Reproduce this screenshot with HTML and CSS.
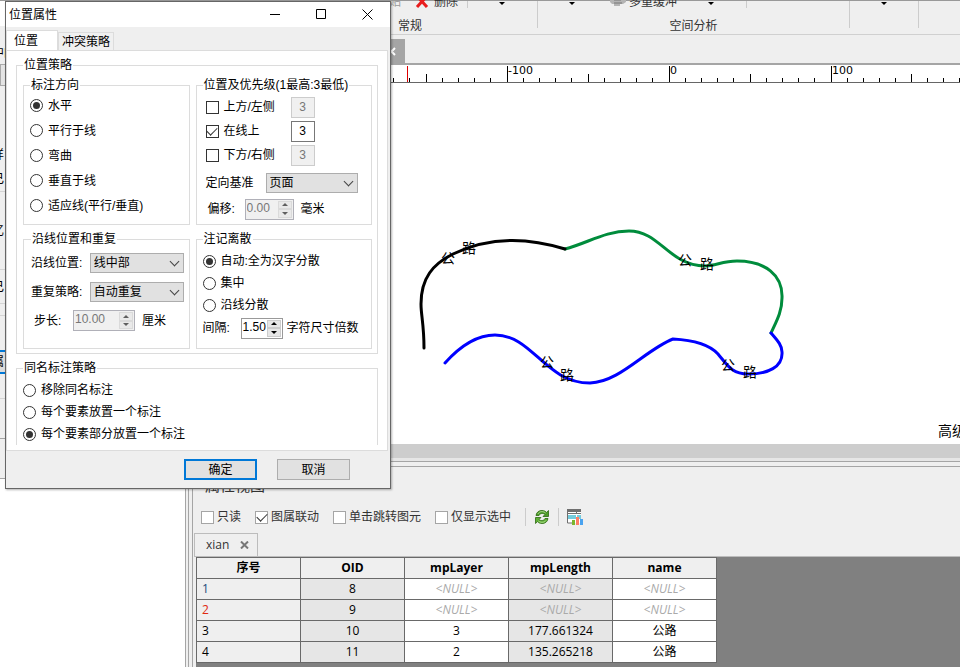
FILE: index.html
```html
<!DOCTYPE html>
<html lang="zh-CN">
<head>
    <meta charset="UTF-8">
    <meta name="viewport" content="width=device-width, initial-scale=1.0">
    <title>位置属性</title>
    <link rel="stylesheet" href="styles.css">
</head>
<body>
    <div class="app">
        <aside class="side">
            <div class="side-head"></div>
            <div class="side-row row-label"><span>中的</span></div>
            <div class="side-box"></div>
            <div class="side-row row-gap"></div>
            <div class="side-row row-text"><span>样</span></div>
            <div class="side-row row-text line"><span>己</span></div>
            <div class="side-row row-tall line"><span>忆</span></div>
            <div class="side-row row-mid line"><span>己</span></div>
            <div class="side-row row-thin line"></div>
            <div class="side-row row-mid"></div>
            <div class="side-row row-selected"><span>属</span></div>
            <div class="side-row row-text line"></div>
            <div class="side-row row-block dark"></div>
            <div class="side-row row-block dark"></div>
            <div class="side-body"></div>
        </aside>

        <main class="main">
            <div class="ribbon">
                <div class="ribbon-group group-start"></div>
                <div class="ribbon-group group-common">
                    <div class="tools">
                        <span class="muted">粘贴</span>
                        <svg class="icon-delete" width="14" height="14" viewBox="0 0 14 14"><path d="M2 2L12 13M12 2L2 13" stroke="#e81c1c" stroke-width="3" fill="none"/></svg>
                        <span>删除</span>
                        <i class="tool-sep"></i>
                        <i class="drop"></i>
                    </div>
                    <div class="caption">常规</div>
                </div>
                <div class="ribbon-group group-analysis">
                    <div class="tools">
                        <i class="drop"></i>
                        <svg class="icon-buffer" width="18" height="12" viewBox="0 0 18 12"><path d="M1 5h16v3l-3 2h-3v2H5v-2H3L1 8z" fill="#b4b4b4"/><path d="M5 6h7M5 9h8" stroke="#777" fill="none"/></svg>
                        <span>多重缓冲</span>
                        <i class="drop"></i>
                        <i class="tool-sep"></i>
                    </div>
                    <div class="caption">空间分析</div>
                </div>
                <div class="ribbon-group group-more">
                    <div class="tools"><i class="drop"></i></div>
                </div>
            </div>

            <div class="doc-tabs">
                <div class="doc-tab">
                    <svg width="9" height="9" viewBox="0 0 9 9"><path d="M1 1l7 7M8 1L1 8" stroke="#fff" stroke-width="2" fill="none"/></svg>
                </div>
            </div>

            <svg class="ruler" height="17">
                <g transform="translate(-186 -65)">
                    <path d="M393.500 78v4M409.500 78v4M442.500 78v4M458.500 78v4M474.500 78v4M490.500 78v4M523.500 78v4M539.500 78v4M555.500 78v4M571.500 78v4M604.500 78v4M620.500 78v4M636.500 78v4M652.500 78v4M685.500 78v4M701.500 78v4M717.500 78v4M733.500 78v4M766.500 78v4M782.500 78v4M798.500 78v4M814.500 78v4M847.500 78v4M863.500 78v4M879.500 78v4M895.500 78v4M927.500 78v4M943.500 78v4M959.500 78v4" stroke="#000"/>
                    <path d="M426.500 74v8M588.500 74v8M750.500 74v8M911.500 74v8M507.500 66v16M669.500 66v16M831.500 66v16" stroke="#000"/>
                    <path d="M407.500 66v16" stroke="#e00000"/>
                    <text x="508" y="74">-100</text>
                    <text x="670" y="74">0</text>
                    <text x="832" y="74">100</text>
                </g>
            </svg>

            <svg class="map">
                <g transform="translate(-186 -83)">
                    <path class="road green" d="M565 249C588 243 605 231 629 231C660 231 668 265 705 266C716 266 722 261 737 261C765 261 783 275 782 298C782 312 776 322 771 333"/>
                    <path class="road black" d="M424 348C424 325 421 315 421 304C421 278 433 264 453 254C490 236 530 238 565 249"/>
                    <path class="road blue" d="M445 363C462 344 480 335 495 335C533 335 545 383 590 383C620 382 645 350 673 339C692 340 709 344 718 354C728 366 732 374 748 374C768 374 783 367 782 352C782 345 777 340 771 333"/>
                    <text x="441" y="263">公</text>
                    <text x="462" y="253">路</text>
                    <text x="540" y="367">公</text>
                    <text x="560" y="380">路</text>
                    <text x="678" y="265">公</text>
                    <text x="700" y="269">路</text>
                    <text x="721" y="370">公</text>
                    <text x="743" y="377">路</text>
                    <text x="938" y="436">高级</text>
                </g>
            </svg>
            <div class="scrollbar"></div>

            <section class="dock">
                <div class="dock-inner">
                    <h2 class="dock-title">属性视图</h2>
                    <div class="dock-tools">
                        <label><input type="checkbox" class="check light">只读</label>
                        <label><input type="checkbox" class="check light" checked>图属联动</label>
                        <label><input type="checkbox" class="check light">单击跳转图元</label>
                        <label><input type="checkbox" class="check light">仅显示选中</label>
                        <i class="bar"></i>
                        <button class="icon-button" aria-label="刷新">
                            <svg width="16" height="16" viewBox="0 0 16 16">
                                <path d="M2 6.500C2.500 3 5 1.500 8 1.500c2 0 3.500.7 4.500 1.900L14.500 1.500v6H9l2-2C9.500 4 6 4 5 6.500z" fill="#4c9c28" stroke="#2c6812" stroke-width=".8"/>
                                <path d="M14 9.500c-.5 3.500-3 5-6 5-2 0-3.500-.7-4.500-1.900L1.500 14.500v-6H7l-2 2c1.500 1.500 5 1.500 6-1z" fill="#5db034" stroke="#2c6812" stroke-width=".8"/>
                                <path d="M4 4.800c1.500-2.500 5-3 7.500-.8M12 11.500c-1.500 2-5 2.500-7.500.5" stroke="#b5e096" fill="none"/>
                            </svg>
                        </button>
                        <i class="bar"></i>
                        <button class="icon-button" aria-label="统计">
                            <svg width="17" height="17" viewBox="0 0 17 17">
                                <path d="M0 0h14v5H0z" fill="#6f6f6f"/>
                                <path d="M1 3h8v1H1zM10 3h4v1h-4z" fill="#fff"/>
                                <path d="M1 5h13v9H1z" fill="#fff"/>
                                <path d="M1 6h8v4H1zM10 6h4v4h-4z" fill="#74ccdc"/>
                                <path d="M.5 4v10H5" stroke="#6f6f6f" fill="none"/>
                                <path d="M5 11h3v5H5z" fill="#7ab62d"/>
                                <path d="M9 8h3v8H9z" fill="#ff7d66"/>
                                <path d="M13 10h3v6h-3z" fill="#4aa3f0"/>
                            </svg>
                        </button>
                    </div>
                    <div class="sheet-tabs">
                        <div class="sheet-tab">
                            <span>xian</span>
                            <button class="icon-button" aria-label="关闭">
                                <svg width="9" height="8" viewBox="0 0 9 8"><path d="M1 0.500l7 7M8 0.500l-7 7" stroke="#777" stroke-width="2" fill="none"/></svg>
                            </button>
                        </div>
                    </div>
                    <div class="grid-wrap">
                        <table class="grid">
                            <thead>
                                <tr><th>序号</th><th>OID</th><th>mpLayer</th><th>mpLength</th><th>name</th></tr>
                            </thead>
                            <tbody>
                                <tr><td class="num blue-num">1</td><td class="shade">8</td><td class="null">&lt;NULL&gt;</td><td class="shade null">&lt;NULL&gt;</td><td class="null">&lt;NULL&gt;</td></tr>
                                <tr><td class="num red-num">2</td><td class="shade">9</td><td class="null">&lt;NULL&gt;</td><td class="shade null">&lt;NULL&gt;</td><td class="null">&lt;NULL&gt;</td></tr>
                                <tr><td class="num">3</td><td class="shade">10</td><td>3</td><td class="shade">177.661324</td><td>公路</td></tr>
                                <tr><td class="num">4</td><td class="shade">11</td><td>2</td><td class="shade">135.265218</td><td>公路</td></tr>
                            </tbody>
                        </table>
                    </div>
                </div>
            </section>
        </main>
    </div>

    <div class="dialog" role="dialog" aria-labelledby="dialog-title">
        <div class="titlebar">
            <h1 id="dialog-title">位置属性</h1>
            <button class="window-button" aria-label="最小化"><svg width="11" height="11"><path d="M0 5.500h10" stroke="#000"/></svg></button>
            <button class="window-button" aria-label="最大化"><svg width="11" height="11"><path d="M.5.500h9v9h-9z" stroke="#000" fill="none"/></svg></button>
            <button class="window-button" aria-label="关闭"><svg width="11" height="11"><path d="M.5.500l10 10M10.500.500l-10 10" stroke="#000"/></svg></button>
        </div>
        <div class="tabs">
            <button class="tab active">位置</button>
            <button class="tab">冲突策略</button>
        </div>
        <div class="pane">
            <fieldset class="outer">
                <legend>位置策略</legend>
                <div class="columns">
                    <fieldset class="inner direction">
                        <legend>标注方向</legend>
                        <label><input type="radio" class="radio" name="direction" checked>水平</label>
                        <label><input type="radio" class="radio" name="direction">平行于线</label>
                        <label><input type="radio" class="radio" name="direction">弯曲</label>
                        <label><input type="radio" class="radio" name="direction">垂直于线</label>
                        <label><input type="radio" class="radio" name="direction">适应线(平行/垂直)</label>
                    </fieldset>

                    <fieldset class="inner priority">
                        <legend>位置及优先级(1最高:3最低)</legend>
                        <div class="place">
                            <label><input type="checkbox" class="check">上方/左侧</label>
                            <input type="text" class="level" value="3" aria-label="上方优先级" disabled>
                        </div>
                        <div class="place">
                            <label><input type="checkbox" class="check" checked>在线上</label>
                            <input type="text" class="level" value="3" aria-label="线上优先级">
                        </div>
                        <div class="place">
                            <label><input type="checkbox" class="check">下方/右侧</label>
                            <input type="text" class="level" value="3" aria-label="下方优先级" disabled>
                        </div>
                        <div class="field base">
                            <label for="base">定向基准</label>
                            <span class="combo"><select id="base"><option>页面</option></select></span>
                        </div>
                        <div class="field offset">
                            <label for="offset">偏移:</label>
                            <span class="spin disabled"><input type="text" id="offset" value="0.00" disabled><span class="arrows"><button aria-label="增加" disabled></button><button aria-label="减少" disabled></button></span></span>
                            <span>毫米</span>
                        </div>
                    </fieldset>

                    <fieldset class="inner repeat">
                        <legend>沿线位置和重复</legend>
                        <div class="field">
                            <label for="along">沿线位置:</label>
                            <span class="combo"><select id="along"><option>线中部</option></select></span>
                        </div>
                        <div class="field">
                            <label for="policy">重复策略:</label>
                            <span class="combo"><select id="policy"><option>自动重复</option></select></span>
                        </div>
                        <div class="field step">
                            <label for="step">步长:</label>
                            <span class="spin wide disabled"><input type="text" id="step" value="10.00" disabled><span class="arrows"><button aria-label="增加" disabled></button><button aria-label="减少" disabled></button></span></span>
                            <span>厘米</span>
                        </div>
                    </fieldset>

                    <fieldset class="inner spread">
                        <legend>注记离散</legend>
                        <label><input type="radio" class="radio" name="spread" checked>自动:全为汉字分散</label>
                        <label><input type="radio" class="radio" name="spread">集中</label>
                        <label><input type="radio" class="radio" name="spread">沿线分散</label>
                        <div class="field">
                            <label for="space">间隔:</label>
                            <span class="spin narrow"><input type="text" id="space" value="1.50"><span class="arrows"><button aria-label="增加"></button><button aria-label="减少"></button></span></span>
                            <span>字符尺寸倍数</span>
                        </div>
                    </fieldset>
                </div>
            </fieldset>

            <fieldset class="outer same-name">
                <legend>同名标注策略</legend>
                <label><input type="radio" class="radio" name="same">移除同名标注</label>
                <label><input type="radio" class="radio" name="same">每个要素放置一个标注</label>
                <label><input type="radio" class="radio" name="same" checked>每个要素部分放置一个标注</label>
            </fieldset>
        </div>
        <div class="buttons">
            <button class="button default">确定</button>
            <button class="button">取消</button>
        </div>
    </div>
</body>
</html>
```

FILE: styles.css
```css
* {
    box-sizing: border-box;
}
body {
    margin: 0;
    height: 100vh;
    overflow: hidden;
    background-color: #efefef;
    color: #000;
    font-family: "Liberation Sans", "Noto Sans CJK SC", sans-serif;
    font-size: 12px;
    line-height: 14px;
}
button, input, select {
    font: inherit;
    color: inherit;
    margin: 0;
    padding: 0;
    border-radius: 0;
}
svg {
    display: block;
    flex: none;
}
label {
    display: flex;
    align-items: center;
    white-space: nowrap;
}

/* main window */
.app {
    display: flex;
    height: 100%;
    border-top: 1px solid #999;
}
.side {
    flex: none;
    display: flex;
    flex-direction: column;
    width: 186px;
    border-right: 1px solid #a5a5a5;
}
.side-head {
    height: 25px;
    background-color: #fff;
}
.side-row {
    display: flex;
    align-items: center;
    height: 24px;
}
.side-row span {
    margin-left: -8px;
}
.row-label {
    height: 38px;
    align-items: flex-end;
    padding-bottom: 4px;
}
.side-box {
    height: 22px;
    border: 1px solid #aaa;
    background-color: #e4e4e4;
}
.row-gap {
    height: 56px;
}
.row-text {
    height: 25px;
}
.row-tall {
    height: 78px;
}
.row-mid {
    height: 34px;
}
.row-thin {
    height: 12px;
}
.row-selected {
    border-top: 2px solid #0078d7;
    border-bottom: 2px solid #0078d7;
    background-color: #ddd;
}
.row-block {
    height: 40px;
}
.line {
    border-bottom: 1px solid #d5d5d5;
}
.dark {
    border-bottom: 1px solid #a5a5a5;
}
.side-body {
    flex: 1;
    background-color: #fff;
}
.main {
    flex: 1;
    min-width: 0;
    display: flex;
    flex-direction: column;
}

/* ribbon */
.ribbon {
    display: flex;
    flex: none;
    height: 34px;
    border-bottom: 1px solid #d0d0d0;
    color: #333;
}
.ribbon-group {
    height: 27px;
    border-right: 1px solid #ccc;
}
.group-start {
    width: 97px;
}
.group-common {
    width: 255px;
}
.group-analysis {
    width: 312px;
}
.group-more {
    width: 69px;
}
.tools {
    display: flex;
    align-items: flex-end;
    height: 7px;
    white-space: nowrap;
}
.tools span {
    line-height: 16px;
    margin-bottom: -2px;
}
.muted {
    color: #999;
    margin-left: 94px;
}
.icon-delete {
    margin: 0 5px 0 14px;
}
.tool-sep {
    width: 1px;
    height: 7px;
    margin-left: 9px;
    background-color: #ccc;
}
.drop {
    margin: 0 0 3px 31px;
    border: 3px solid transparent;
    border-top-color: #000;
    border-bottom: 0;
}
.icon-buffer {
    margin: 0 2px 2px 34px;
}
.group-analysis .tool-sep {
    margin-left: 32px;
}
.caption {
    margin-top: 11px;
    text-align: center;
}
.doc-tabs {
    flex: none;
    display: flex;
    align-items: flex-end;
    height: 30px;
    border-bottom: 2px solid #a5a5a5;
}
.doc-tab {
    display: flex;
    align-items: center;
    justify-content: flex-end;
    width: 219px;
    height: 24px;
    padding-right: 9px;
    background-color: #a5a5a5;
}

/* ruler and map */
.ruler {
    width: 100%;
    background-color: #fff;
    font-family: "DejaVu Sans", sans-serif;
    font-size: 11px;
}
.map {
    flex: 1;
    width: 100%;
    min-height: 0;
    border-top: 1px solid #666;
    background-color: #fff;
    font-size: 14px;
}
.road {
    fill: none;
    stroke-width: 3;
    stroke-linecap: round;
}
.black {
    stroke: #000;
}
.green {
    stroke: #008c3c;
}
.blue {
    stroke: #00f;
}
.scrollbar {
    flex: none;
    height: 17px;
    border-bottom: 3px solid #e6e6e6;
    background-color: #cdcdcd;
}

/* attribute view */
.dock {
    flex: none;
    display: flex;
    height: 206px;
    margin-left: 2px;
    padding: 4px 0 0 3px;
    border-top: 1px solid #a5a5a5;
    border-left: 1px solid #a5a5a5;
}
.dock-inner {
    flex: 1;
    min-width: 0;
    display: flex;
    flex-direction: column;
    padding-left: 1px;
    border-top: 1px solid #a5a5a5;
    border-left: 1px solid #a5a5a5;
}
.dock-title {
    margin: 12px 0 0 11px;
    font-size: 15px;
    font-weight: normal;
    color: #333;
}
.dock-tools {
    display: flex;
    align-items: center;
    height: 26px;
    margin: 11px 0 0 7px;
    color: #333;
}
.dock-tools label {
    margin-right: 14px;
}
.bar {
    width: 1px;
    height: 18px;
    margin-right: 8px;
    background-color: #ccc;
}
.icon-button {
    display: flex;
    border: 0;
    background: none;
}
.dock-tools .icon-button {
    margin-right: 8px;
}
.sheet-tabs {
    display: flex;
    height: 24px;
    margin-top: 3px;
    border-bottom: 1px solid #bcbcbc;
}
.sheet-tab {
    display: flex;
    align-items: center;
    gap: 11px;
    width: 64px;
    height: 23px;
    padding-left: 11px;
    border: 1px solid #bcbcbc;
    border-bottom: 0;
    color: #333;
    font-family: "Open Sans", sans-serif;
}
.grid-wrap {
    flex: 1;
    margin-left: 2px;
    background-color: #808080;
}
.grid {
    width: 521px;
    table-layout: fixed;
    border-collapse: collapse;
    font-family: "Open Sans", "Noto Sans CJK SC", sans-serif;
    line-height: 16px;
}
.grid th, .grid td {
    height: 21px;
    padding: 0;
    border: 1px solid #696969;
    text-align: center;
}
.grid th {
    background-color: #efefef;
    font-weight: bold;
}
.grid td {
    background-color: #fff;
}
.grid td.num {
    padding-left: 5px;
    background-color: #efefef;
    text-align: left;
}
.grid td.shade {
    background-color: #e6e6e6;
}
.grid td.null {
    color: #aaa;
    font-style: italic;
}
.grid td.blue-num {
    color: #1a4a7a;
}
.grid td.red-num {
    color: #e02810;
}

/* form controls */
.check, .radio {
    flex: none;
    appearance: none;
    width: 13px;
    height: 13px;
    margin-right: 5px;
    border: 1px solid #333;
    background-color: #fff;
}
.radio {
    padding: 2px;
    border-radius: 50%;
}
.radio:checked {
    background: #333 content-box;
}
.check {
    display: grid;
    place-items: center;
}
.check:checked::after {
    content: "";
    width: 9px;
    height: 5px;
    margin-bottom: 3px;
    border-left: 1px solid #333;
    border-bottom: 1px solid #333;
    transform: rotate(-45deg);
}
.check.light {
    margin-right: 3px;
    border-color: #a5a5a5;
}
.combo {
    display: grid;
    align-items: center;
    width: 94px;
}
.combo select, .combo::after {
    grid-area: 1 / 1;
}
.combo select {
    appearance: none;
    width: 100%;
    height: 20px;
    padding-left: 3px;
    border: 1px solid #adadad;
    background-color: #e1e1e1;
}
.combo::after {
    content: "";
    justify-self: end;
    width: 6px;
    height: 6px;
    margin: 0 6px 3px 0;
    border-right: 1px solid #444;
    border-bottom: 1px solid #444;
    transform: rotate(45deg);
    pointer-events: none;
}
.spin {
    display: flex;
    width: 49px;
    height: 21px;
    border: 1px solid #999;
    background-color: #fff;
}
.spin.wide {
    width: 62px;
}
.spin.narrow {
    width: 42px;
}
.spin input {
    flex: 1;
    min-width: 0;
    width: 0;
    height: 16px;
    padding-left: 1px;
    border: 0;
    background: none;
}
.arrows {
    display: flex;
    flex-direction: column;
    width: 15px;
    padding: 1px 1px 1px 0;
}
.arrows button {
    flex: 1;
    display: flex;
    align-items: center;
    justify-content: center;
    border: 1px solid #ccc;
    background-color: #e6e6e6;
}
.arrows button::before {
    content: "";
    border: 3px solid transparent;
    border-top: 0;
    border-bottom-color: #000;
}
.arrows button:last-child::before {
    border-top: 3px solid #000;
    border-bottom: 0;
}
.spin.disabled {
    border-color: #b0b0b8;
    background-color: #f0f0f0;
    color: #777;
}
.spin.disabled button {
    opacity: 0.6;
}
.level {
    width: 24px;
    height: 21px;
    border: 1px solid #777;
    background-color: #fff;
    text-align: center;
}
.level:disabled {
    border-color: #ccc;
    background-color: #f0f0f0;
    color: #777;
}

/* dialog */
.dialog {
    position: absolute;
    top: 1px;
    left: 5px;
    width: 386px;
    border: 1px solid #666;
    background-color: #efefef;
    box-shadow: 1px 1px 2px rgba(0, 0, 0, 0.3);
}
.titlebar {
    display: flex;
    align-items: center;
    height: 25px;
    background-color: #fff;
}
.titlebar h1 {
    flex: 1;
    margin: 0;
    padding-left: 3px;
    font-size: 12px;
    font-weight: normal;
}
.window-button {
    display: flex;
    justify-content: center;
    width: 46px;
    border: 0;
    background: none;
}
.tabs {
    display: flex;
    align-items: flex-end;
    height: 23px;
    padding-top: 3px;
}
.tab {
    height: 18px;
    padding: 0 3px;
    border: 1px solid #dcdcdc;
    border-bottom: 0;
    background-color: #f0f0f0;
}
.tab.active {
    width: 52px;
    height: 20px;
    padding: 0 7px;
    background-color: #fff;
    text-align: left;
}
.pane {
    margin-right: 2px;
    padding: 7px 9px 5px;
    border: 1px solid #dcdcdc;
    background-color: #fff;
}
fieldset {
    min-width: 0;
    margin: 0;
    border: 1px solid #dcdcdc;
}
legend {
    padding: 0 1px;
}
.outer {
    padding: 6px 5px 4px 6px;
}
.columns {
    display: grid;
    grid-template-columns: 167fr 177fr;
    gap: 7px 6px;
}
.inner {
    padding: 0 6px;
}
.direction {
    padding-top: 1px;
    padding-bottom: 6px;
}
.direction label {
    height: 25px;
}
.priority {
    padding: 3px 9px 5px;
}
.priority legend {
    margin-left: -3px;
}
.place {
    display: flex;
    align-items: center;
    height: 24px;
}
.place label {
    width: 85px;
}
.field {
    display: flex;
    align-items: center;
    height: 29px;
}
.base label {
    width: 60px;
}
.base .combo {
    width: 92px;
}
.base {
    height: 32px;
}
.offset {
    height: 20px;
    padding-left: 2px;
}
.offset label {
    width: 37px;
}
.offset .spin, .step .spin {
    margin-right: 7px;
}
.repeat {
    padding: 2px 5px 13px 7px;
}
.repeat .field label {
    width: 59px;
}
.repeat .step {
    padding-left: 3px;
}
.repeat .step label {
    width: 39px;
}
.spread {
    padding-top: 4px;
}
.spread > label, .same-name label {
    height: 22px;
}
.spread .field {
    height: 24px;
}
.spread .field label {
    width: 38px;
}
.spread .spin {
    margin-right: 4px;
}
.same-name {
    margin-top: 7px;
    padding-bottom: 0;
    padding-top: 4px;
    border-bottom: 0;
}
.buttons {
    display: flex;
    justify-content: flex-end;
    gap: 20px;
    padding: 8px 40px 8px;
}
.button {
    width: 73px;
    height: 21px;
    border: 1px solid #adadad;
    background-color: #e1e1e1;
}
.button.default {
    border: 2px solid #0078d7;
}
```
